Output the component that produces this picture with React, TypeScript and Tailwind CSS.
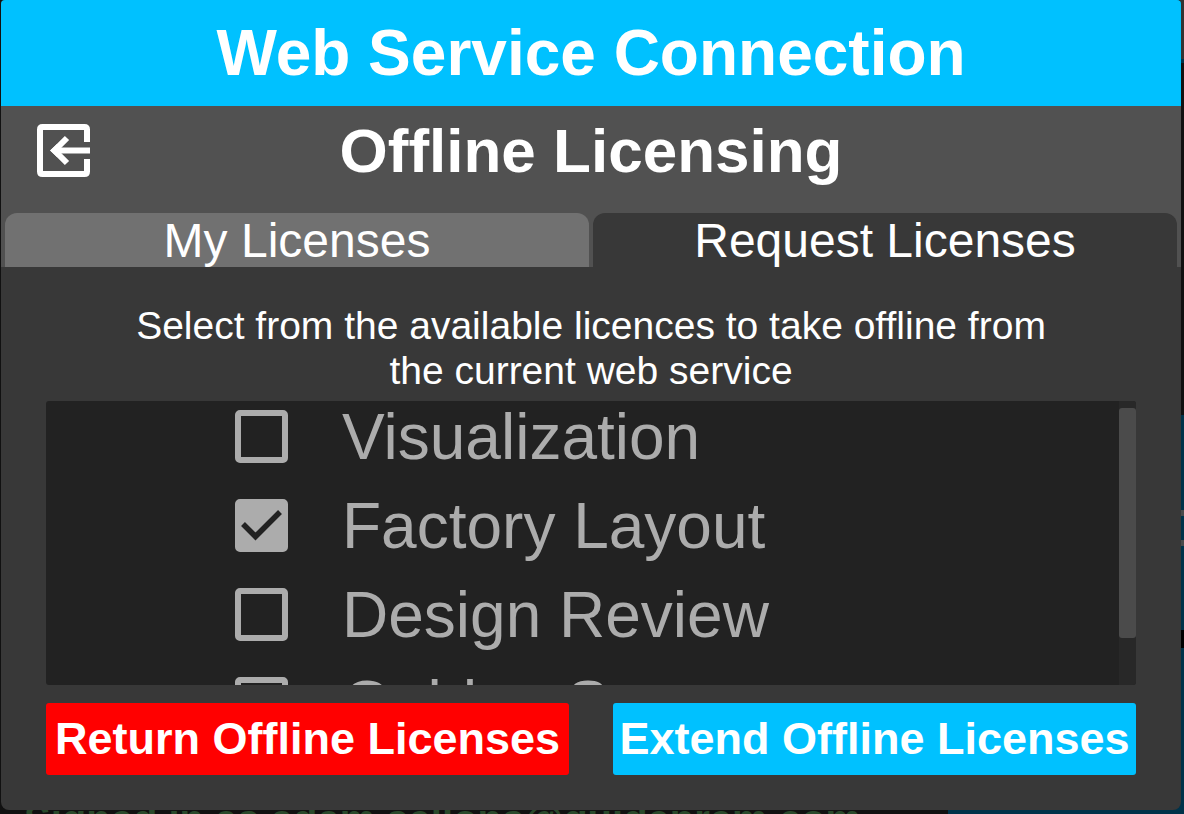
import { useState } from "react";

const FONT = "font-['Liberation_Sans',Arial,sans-serif]";

const LICENSES = ["Visualization", "Factory Layout", "Design Review", "Golden Source"];

function ExitIcon() {
  return (
    <svg viewBox="0 0 54 54" className="size-[54px]" fill="none" stroke="white" aria-hidden="true">
      <path d="M50 18V5.5Q50 3 47.5 3H5.500Q3 3 3 5.5V47.5Q3 50 5.5 50H47.5Q50 50 50 47.5V35" strokeWidth="6" />
      <path d="M53 26.500H20" strokeWidth="6" />
      <path d="M30 14L17.500 26.500L30 39" strokeWidth="6" />
      <path d="M13 26.500L20 20V33Z" fill="white" stroke="none" />
    </svg>
  );
}

function LicenseRow({ name, checked, onToggle }: { name: string; checked: boolean; onToggle: () => void }) {
  return (
    <label className="flex h-[71px] shrink-0 cursor-pointer items-center gap-[54px]">
      <span className="grid size-[53px] shrink-0">
        <input
          type="checkbox"
          checked={checked}
          onChange={onToggle}
          className="col-start-1 row-start-1 size-full appearance-none rounded-[5px] border-[6px] border-[#acacac] checked:bg-[#acacac]"
        />
        {checked && (
          <svg viewBox="0 0 53 53" className="pointer-events-none col-start-1 row-start-1 size-full" fill="none" aria-hidden="true">
            <path d="M8 25L20.500 37.500L45 13" stroke="#222222" strokeWidth="5.500" />
          </svg>
        )}
      </span>
      <span className="pt-0.5 text-[64px] leading-[71px] whitespace-nowrap text-[#acacac]">{name}</span>
    </label>
  );
}

function Backdrop() {
  return (
    <div className="absolute inset-0 flex flex-col items-end" aria-hidden="true">
      <div className="h-[59px] w-1 bg-[#333333]" />
      <div className="h-1 w-1 bg-[#00334a]" />
      <div className="h-[352px] w-1" />
      <div className="h-[215px] w-1 bg-[#00334a] pt-[95px]">
        <div className="h-1.5 bg-[#4b4b4b]" />
        <div className="mt-6 h-1.5 bg-[#4b4b4b]" />
      </div>
      <div className="h-[18px] w-1 bg-black" />
      <div className="w-[236px] flex-1 bg-[#00334a]" />
    </div>
  );
}

export default function App() {
  const [selected, setSelected] = useState<string[]>(["Factory Layout"]);
  const [tab, setTab] = useState("Request Licenses");
  const toggle = (name: string) =>
    setSelected((s) => (s.includes(name) ? s.filter((n) => n !== name) : [...s, name]));

  return (
    <div className={`relative flex h-screen flex-col overflow-hidden bg-[#111111] text-white ${FONT}`}>
      <Backdrop />

      <main className="relative mr-[3px] ml-px flex shrink-0 flex-col overflow-hidden rounded-t-[4px] rounded-b-lg bg-[#383838]">
        <header className="flex h-[106px] items-center justify-center bg-[#00c1ff]">
          <h1 className="text-[64px] leading-[72px] font-bold">Web Service Connection</h1>
        </header>

        <div className="bg-[#515151]">
          <div className="grid h-[107px] grid-cols-[54px_1fr_54px] items-start px-9 pt-[9px]">
            <button type="button" aria-label="Back" className="mt-[9px] cursor-pointer">
              <ExitIcon />
            </button>
            <h2 className="text-center text-[62px] leading-[72px] font-bold">Offline Licensing</h2>
          </div>
          <div role="tablist" className="grid grid-cols-2 gap-1 px-1">
            {["My Licenses", "Request Licenses"].map((t) => (
              <button
                key={t}
                type="button"
                role="tab"
                aria-selected={tab === t}
                onClick={() => setTab(t)}
                className={`h-[54px] cursor-pointer rounded-t-xl pt-0.5 text-[48px] leading-[52px] ${
                  tab === t ? "bg-[#383838]" : "bg-[#717171]"
                }`}
              >
                {t}
              </button>
            ))}
          </div>
        </div>

        <section className="flex flex-col px-[45px] pt-9 pb-[35px]">
          <p className="mx-auto max-w-[960px] text-center text-[39px] leading-[45px]">
            Select from the available licences to take offline from the current web service
          </p>
          <div className="mt-2 flex h-[284px] overflow-hidden rounded-[3px] bg-[#222222]">
            <div className="flex flex-1 flex-col gap-[18px] overflow-hidden pl-[189px]">
              {LICENSES.map((name) => (
                <LicenseRow
                  key={name}
                  name={name}
                  checked={selected.includes(name)}
                  onToggle={() => toggle(name)}
                />
              ))}
            </div>
            <div className="w-[17px] bg-[#282828] pt-[7px]">
              <div className="h-[230px] rounded-[3px] bg-[#4b4b4b]" />
            </div>
          </div>
          <div className="mt-[18px] grid grid-cols-2 gap-11 text-[45px] leading-[48px] font-bold">
            <button type="button" className="h-[72px] cursor-pointer rounded-[3px] bg-[#ff0000] whitespace-nowrap">
              Return Offline Licenses
            </button>
            <button type="button" className="h-[72px] cursor-pointer rounded-[3px] bg-[#00c1ff] whitespace-nowrap">
              Extend Offline Licenses
            </button>
          </div>
        </section>
      </main>

      <footer className="relative min-h-0 flex-1 overflow-hidden pl-6">
        <p className="-mt-3 text-[40px] leading-[42px] font-bold whitespace-nowrap text-[#2a4a2c]">
          Signed in as adam.sellons@quideprem.com
        </p>
      </footer>
    </div>
  );
}
